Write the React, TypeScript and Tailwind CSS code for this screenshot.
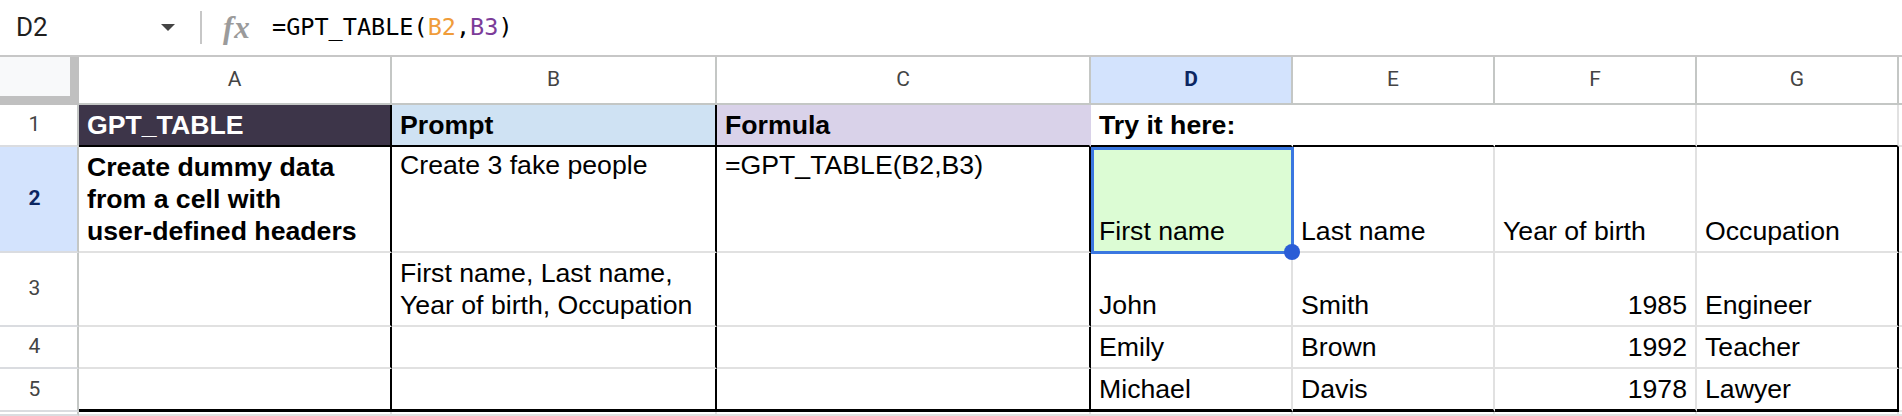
import React from "react";

type CellProps = {
  r?: string;
  b?: string;
  className?: string;
  children?: React.ReactNode;
};

// one spreadsheet cell; r / b carry the full border classes for right and bottom
const Cell: React.FC<CellProps> = ({
  r = "border-r-2 border-r-[#e1e1e1]",
  b = "border-b-2 border-b-[#e1e1e1]",
  className = "",
  children,
}) => (
  <div
    className={`flex min-w-0 px-[8px] text-[26.67px] leading-[32px] text-black whitespace-nowrap ${r} ${b} ${className}`}
  >
    {children}
  </div>
);

const ColHead: React.FC<{ label?: string; active?: boolean }> = ({ label, active }) => (
  <div
    className={`flex items-center justify-center border-r-2 border-r-[#c4c7c5] border-b-2 border-b-[#c4c7c5] font-['Roboto'] text-[21px] ${
      active ? "bg-[#d3e3fd] font-bold text-[#0b2662]" : "bg-white text-[#444]"
    }`}
  >
    {label}
  </div>
);

const RowHead: React.FC<{ label?: string; active?: boolean }> = ({ label, active }) => (
  <div
    className={`flex items-center justify-center pr-[8px] border-r-2 border-r-[#c4c7c5] border-b-2 border-b-[#dadce0] font-['Roboto'] text-[21px] ${
      active ? "bg-[#d3e3fd] font-bold text-[#0b2662]" : "bg-white text-[#444]"
    }`}
  >
    {label}
  </div>
);

const BLACK_R = "border-r-2 border-r-black";
const BLACK_B = "border-b-2 border-b-black";
const BOTTOM = "border-b-[3px] border-b-black";

export default function App() {
  return (
    <div className="w-[1902px] h-[416px] overflow-hidden bg-white font-['Liberation_Sans',Arial,sans-serif]">
      {/* formula bar */}
      <div className="flex items-center h-[57px] border-b-2 border-b-[#c7c7c7]">
        <div className="flex items-center justify-between w-[200px] pl-[16px] pr-[25px]">
          <span className="font-['Roboto'] text-[26px] text-[#1f1f1f]">D2</span>
          <svg width="14" height="7" viewBox="0 0 14 7">
            <polygon points="0,0 14,0 7,7" fill="#444" />
          </svg>
        </div>
        <div className="w-[2px] h-[33px] bg-[#c7c7c7]" />
        <span className="ml-[21px] w-[30px] font-['Liberation_Serif',serif] italic font-bold text-[31px] leading-none tracking-[1px] text-[#9b9b9b]">
          fx
        </span>
        <span className="ml-[19px] font-['DejaVu_Sans_Mono',monospace] text-[23.5px] text-black">
          =GPT_TABLE(<span className="text-[#f09c3a]">B2</span>,
          <span className="text-[#7c3c99]">B3</span>)
        </span>
      </div>

      <div className="grid grid-cols-[79px_313px_325px_374px_202px_202px_202px_202px_1fr] grid-rows-[48px_42px_106px_74px_42px_43px_1fr] h-[359px]">
        {/* column headers */}
        <div className="bg-[#c0c0c0] pr-[9px] pb-[9px]">
          <div className="w-full h-full bg-[#f8f9fa]" />
        </div>
        <ColHead label="A" />
        <ColHead label="B" />
        <ColHead label="C" />
        <ColHead label="D" active />
        <ColHead label="E" />
        <ColHead label="F" />
        <ColHead label="G" />
        <ColHead />

        {/* row 1 */}
        <RowHead label="1" />
        <Cell r={BLACK_R} b={BLACK_B} className="items-end pb-[4px] bg-[#3d3549] text-white font-bold">
          GPT_TABLE
        </Cell>
        <Cell r={BLACK_R} b={BLACK_B} className="items-end pb-[4px] bg-[#cfe2f3] font-bold">
          Prompt
        </Cell>
        <Cell r="border-r-2 border-r-[#d9d2e9]" b={BLACK_B} className="items-end pb-[4px] bg-[#d9d2e9] font-bold">
          Formula
        </Cell>
        <Cell r="border-r-2 border-r-white" b={BLACK_B} className="items-end pb-[4px] font-bold">
          Try it here:
        </Cell>
        <Cell r="border-r-2 border-r-white" b={BLACK_B} />
        <Cell b={BLACK_B} />
        <Cell b={BLACK_B} />
        <Cell />

        {/* row 2 */}
        <RowHead label="2" active />
        <Cell r={BLACK_R} className="items-end pb-[4px] font-bold">
          <div>
            Create dummy data
            <br />
            from a cell with
            <br />
            user-defined headers
          </div>
        </Cell>
        <Cell r={BLACK_R} className="items-start pt-[2px]">
          Create 3 fake people
        </Cell>
        <Cell r={BLACK_R} className="items-start pt-[2px]">
          =GPT_TABLE(B2,B3)
        </Cell>
        <Cell className="relative items-end pb-[4px] bg-[#dcfcd4]">
          First name
          <div className="absolute top-0 left-0 -right-[3px] -bottom-[3px] z-10 border-[3px] border-[#3a77e0]" />
          <div className="absolute -right-[9px] -bottom-[9px] z-20 w-[16px] h-[16px] rounded-full bg-[#2a5dd6]" />
        </Cell>
        <Cell className="items-end pb-[4px]">Last name</Cell>
        <Cell className="items-end pb-[4px]">Year of birth</Cell>
        <Cell r={BLACK_R} className="items-end pb-[4px]">
          Occupation
        </Cell>
        <Cell />

        {/* row 3 */}
        <RowHead label="3" />
        <Cell r={BLACK_R} />
        <Cell r={BLACK_R} className="items-end pb-[4px]">
          <div>
            First name, Last name,
            <br />
            Year of birth, Occupation
          </div>
        </Cell>
        <Cell r={BLACK_R} />
        <Cell className="items-end pb-[4px]">John</Cell>
        <Cell className="items-end pb-[4px]">Smith</Cell>
        <Cell className="items-end justify-end pb-[4px]">1985</Cell>
        <Cell r={BLACK_R} className="items-end pb-[4px]">
          Engineer
        </Cell>
        <Cell />

        {/* row 4 */}
        <RowHead label="4" />
        <Cell r={BLACK_R} />
        <Cell r={BLACK_R} />
        <Cell r={BLACK_R} />
        <Cell className="items-end pb-[4px]">Emily</Cell>
        <Cell className="items-end pb-[4px]">Brown</Cell>
        <Cell className="items-end justify-end pb-[4px]">1992</Cell>
        <Cell r={BLACK_R} className="items-end pb-[4px]">
          Teacher
        </Cell>
        <Cell />

        {/* row 5 */}
        <RowHead label="5" />
        <Cell r={BLACK_R} b={BOTTOM} />
        <Cell r={BLACK_R} b={BOTTOM} />
        <Cell r={BLACK_R} b={BOTTOM} />
        <Cell b={BOTTOM} className="items-end pb-[4px]">
          Michael
        </Cell>
        <Cell b={BOTTOM} className="items-end pb-[4px]">
          Davis
        </Cell>
        <Cell b={BOTTOM} className="items-end justify-end pb-[4px]">
          1978
        </Cell>
        <Cell r={BLACK_R} b={BOTTOM} className="items-end pb-[4px]">
          Lawyer
        </Cell>
        <Cell />

        {/* row 6, cut off by the window */}
        <RowHead />
        <Cell />
        <Cell />
        <Cell />
        <Cell />
        <Cell />
        <Cell />
        <Cell />
        <Cell />
      </div>
    </div>
  );
}
